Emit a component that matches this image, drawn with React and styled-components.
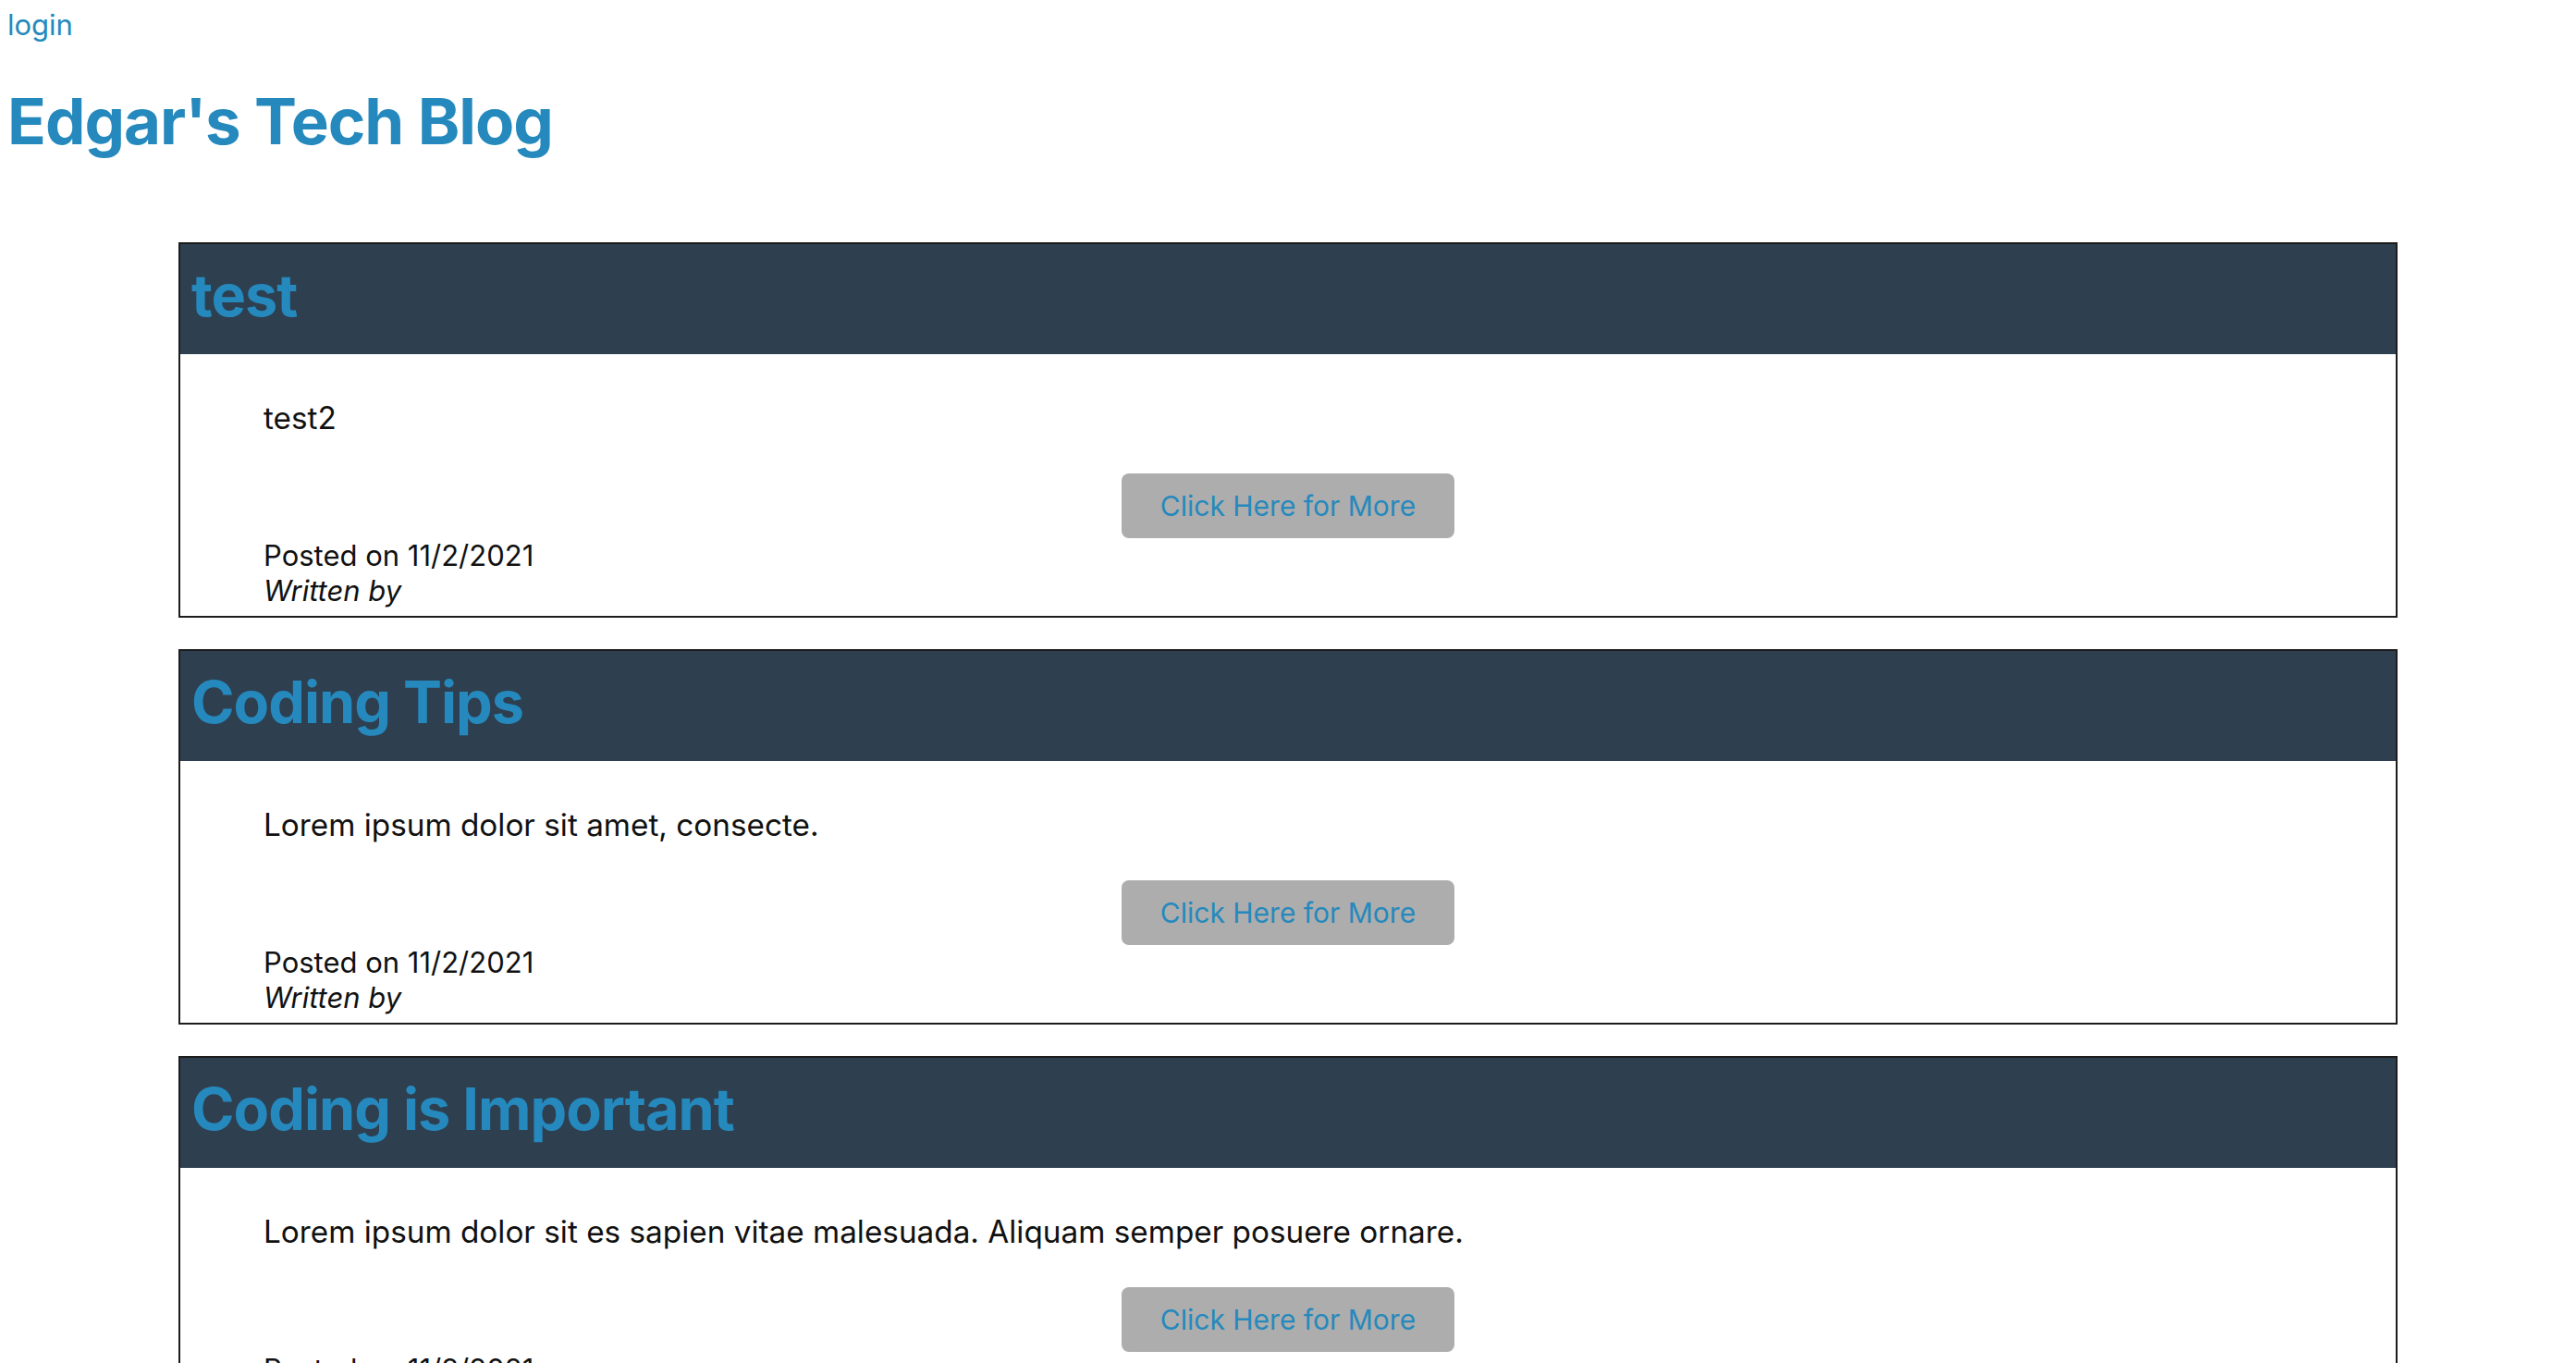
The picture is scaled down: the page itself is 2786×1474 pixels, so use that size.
import React from 'react';
import styled, { createGlobalStyle } from 'styled-components';

const GlobalStyle = createGlobalStyle`
  body {
    margin: 8px;
    background-color: #ffffff;
    font-family: Inter, "Noto Sans", sans-serif;
    color: #111111;
  }
`;

const LoginLink = styled.a`
  display: block;
  font-size: 31px;
  line-height: 38px;
  color: #2589bd;
  text-decoration: none;
`;

const SiteTitle = styled.h1`
  margin: 44px 0 0 0;
  font-size: 69px;
  line-height: 82px;
  font-weight: 700;
  letter-spacing: -1px;
  color: #2589bd;
`;

const PostList = styled.div`
  display: flex;
  flex-direction: column;
  gap: 34px;
  width: 2400px;
  margin: 90px auto 0 auto;
`;

const Card = styled.article`
  border: 2px solid #1c1c1c;
  background-color: #ffffff;
`;

const CardHeader = styled.div`
  height: 119px;
  display: flex;
  align-items: center;
  padding: 0 12px 10px 12px;
  background-color: #2e3f50;
  box-sizing: border-box;
`;

const PostTitle = styled.h2`
  margin: 0;
  font-size: 63px;
  font-weight: 700;
  letter-spacing: -1px;
  color: #2589bd;
`;

const CardBody = styled.div`
  display: flex;
  flex-direction: column;
  padding: 49px 90px 8px 90px;
`;

const Content = styled.p`
  margin: 0 0 40px 0;
  font-size: 33.3px;
  line-height: 40px;
`;

const MoreButton = styled.button`
  align-self: center;
  height: 70px;
  padding: 0 42px;
  border: none;
  border-radius: 8px;
  background-color: #adadad;
  color: #2589bd;
  font-family: Inter, "Noto Sans", sans-serif;
  font-size: 30px;
  cursor: pointer;
`;

const Meta = styled.div`
  font-size: 31px;
  line-height: 38px;
  font-style: ${props => (props.italic ? 'italic' : 'normal')};
`;

const posts = [
  { title: 'test', content: 'test2', date: '11/2/2021' },
  { title: 'Coding Tips', content: 'Lorem ipsum dolor sit amet, consecte.', date: '11/2/2021' },
  {
    title: 'Coding is Important',
    content: 'Lorem ipsum dolor sit es sapien vitae malesuada. Aliquam semper posuere ornare.',
    date: '11/2/2021',
  },
];

const App = () => {
  return (
    <>
      <GlobalStyle />
      <LoginLink href="#">login</LoginLink>
      <SiteTitle>Edgar's Tech Blog</SiteTitle>
      <PostList>
        {posts.map((post, i) => (
          <Card key={i}>
            <CardHeader>
              <PostTitle>{post.title}</PostTitle>
            </CardHeader>
            <CardBody>
              <Content>{post.content}</Content>
              <MoreButton>Click Here for More</MoreButton>
              <Meta>Posted on {post.date}</Meta>
              <Meta italic>Written by</Meta>
            </CardBody>
          </Card>
        ))}
      </PostList>
    </>
  );
};

export default App;
